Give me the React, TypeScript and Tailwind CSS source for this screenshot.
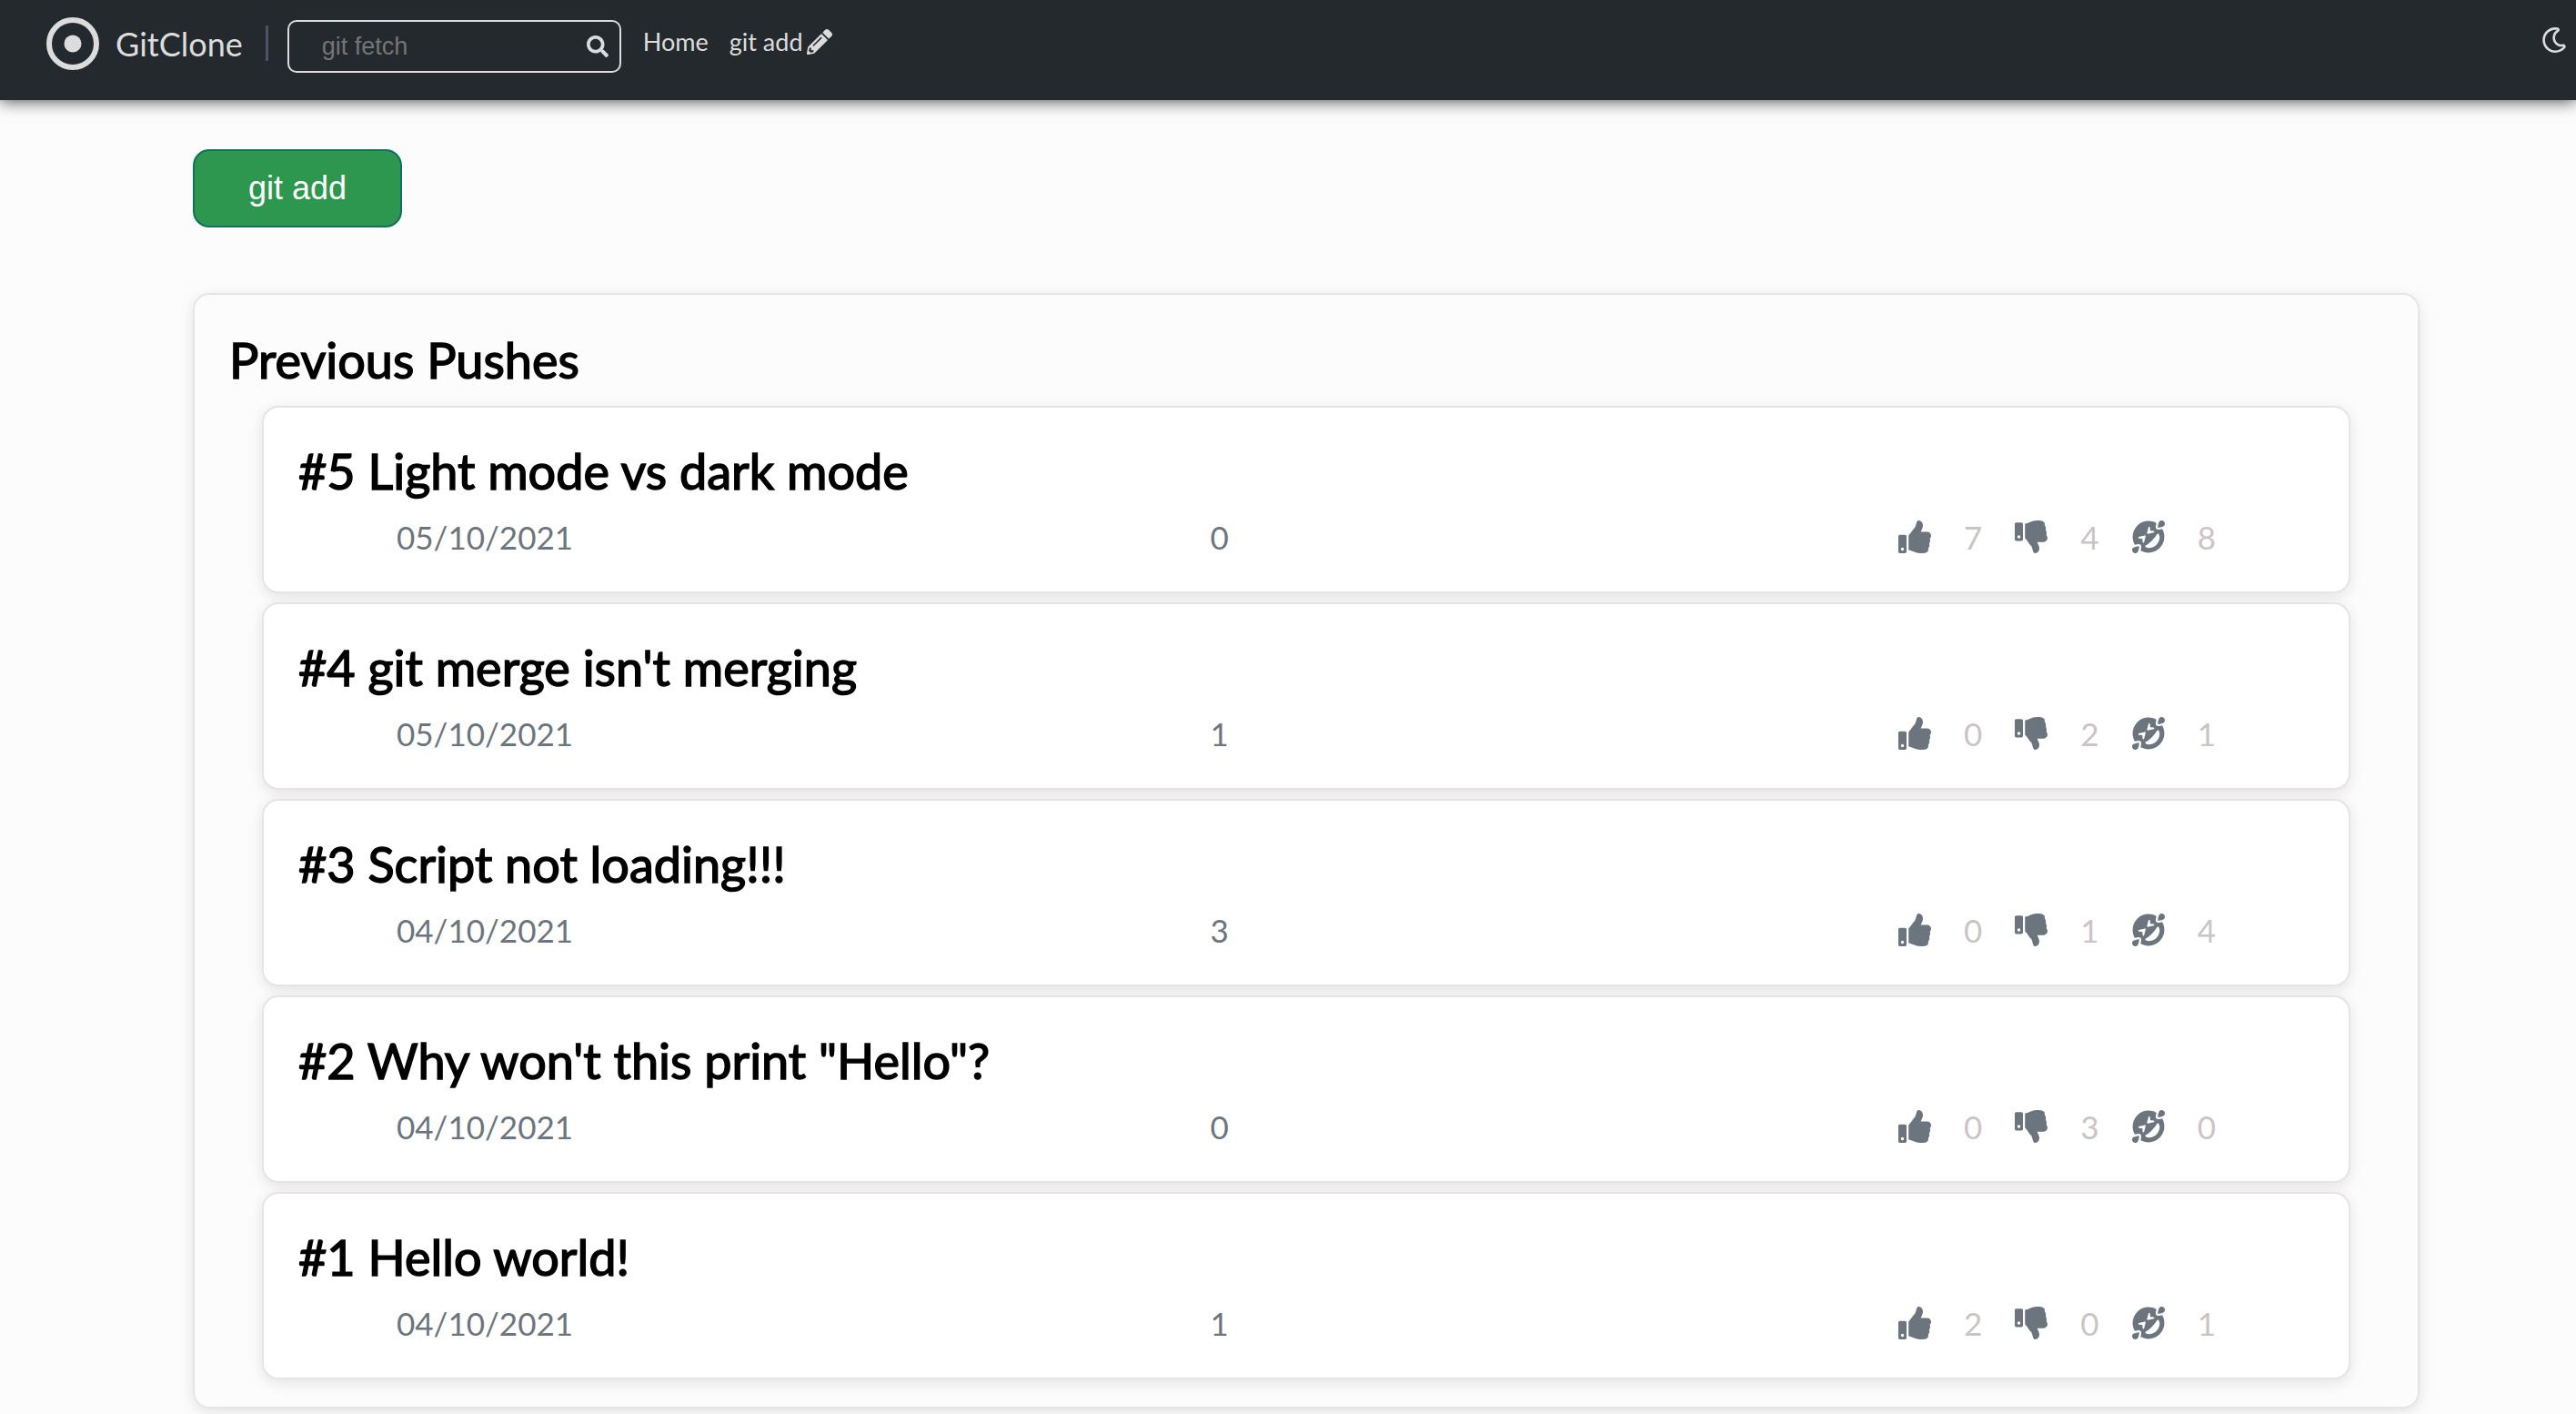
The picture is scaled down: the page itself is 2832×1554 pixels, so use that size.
import { FaPencilAlt, FaSearch, FaThumbsUp, FaThumbsDown, FaGrinSquintTears, FaRegMoon } from "react-icons/fa";

type Push = { id: number; title: string; date: string; comments: number; likes: number; dislikes: number; laughs: number };

const pushes: Push[] = [
  { id: 5, title: "Light mode vs dark mode", date: "05/10/2021", comments: 0, likes: 7, dislikes: 4, laughs: 8 },
  { id: 4, title: "git merge isn't merging", date: "05/10/2021", comments: 1, likes: 0, dislikes: 2, laughs: 1 },
  { id: 3, title: "Script not loading!!!", date: "04/10/2021", comments: 3, likes: 0, dislikes: 1, laughs: 4 },
  { id: 2, title: "Why won't this print \"Hello\"?", date: "04/10/2021", comments: 0, likes: 0, dislikes: 3, laughs: 0 },
  { id: 1, title: "Hello world!", date: "04/10/2021", comments: 1, likes: 2, dislikes: 0, laughs: 1 },
];

function Header() {
  return (
    <header className="flex h-[110px] items-start bg-[#24292e] pl-[51px] pr-[10px] text-[#dcdcdc] shadow-[0_2px_16px_rgba(0,0,0,0.65)]">
      <a href="#" className="mt-[19px] flex items-center gap-[18px]">
        <svg viewBox="0 0 58 58" className="size-[58px]" aria-hidden="true">
          <circle cx="29" cy="29" r="26" fill="none" stroke="currentColor" strokeWidth="6" />
          <circle cx="29" cy="29" r="9.5" fill="currentColor" />
        </svg>
        <span className="text-[36px] leading-[58px]">GitClone</span>
      </a>
      <div className="ml-[25px] mt-7 h-[39px] w-[3px] bg-[#4a5568]" />
      <form className="ml-[21px] mt-[22px] flex h-[58px] w-[367px] items-center rounded-[10px] border-2 border-[#dcdcdc] pl-9 pr-3">
        <input
          type="search"
          aria-label="Search pushes"
          placeholder="git fetch"
          className="min-w-0 flex-1 bg-transparent font-['Liberation_Sans',sans-serif] text-[27px] outline-none placeholder:text-[#757575]"
        />
        <button type="submit" aria-label="Search">
          <FaSearch className="size-6" />
        </button>
      </form>
      <nav className="ml-6 mt-7 flex gap-[23px] text-[27px] leading-9">
        <a href="#">Home</a>
        <a href="#" className="flex items-center gap-1">
          git add <FaPencilAlt className="size-7" />
        </a>
      </nav>
      <button type="button" aria-label="Toggle dark mode" className="ml-auto mt-[30px]">
        <FaRegMoon className="size-7" />
      </button>
    </header>
  );
}

function Reaction({ label, icon: Icon, count }: { label: string; icon: typeof FaThumbsUp; count: number }) {
  return (
    <div className="flex items-center gap-9">
      <button type="button" aria-label={label} className="text-[#6c757d]">
        <Icon className="size-9" />
      </button>
      <span>{count}</span>
    </div>
  );
}

function PushCard({ push }: { push: Push }) {
  return (
    <li className="rounded-[18px] border-2 border-[#e8e4e4] bg-white px-[38px] pb-[38px] pt-9 shadow-[0_4px_16px_rgba(0,0,0,0.1)]">
      <h3 className="text-[54px] leading-[68px] text-black [-webkit-text-stroke:1.5px_black]">
        #{push.id} {push.title}
      </h3>
      <div className="flex items-center justify-between px-[108px] pt-4 text-[35px] leading-[44px] text-[#6c757d]">
        <time>{push.date}</time>
        <span className="pr-9">{push.comments}</span>
        <div className="flex gap-9 text-[#cbc4c6]">
          <Reaction label="Like" icon={FaThumbsUp} count={push.likes} />
          <Reaction label="Dislike" icon={FaThumbsDown} count={push.dislikes} />
          <Reaction label="Laugh" icon={FaGrinSquintTears} count={push.laughs} />
        </div>
      </div>
    </li>
  );
}

export default function App() {
  return (
    <div className="min-h-screen bg-[#fcfcfc] font-[Lato,sans-serif]">
      <Header />
      <main className="pb-[6px] pl-[212px] pr-[172px] pt-[54px]">
        <button
          type="button"
          className="h-[86px] w-[230px] rounded-[18px] border-2 border-[#13705c] bg-[#2e974f] font-['Liberation_Sans',sans-serif] text-[36px] text-white"
        >
          git add
        </button>
        <section className="mt-[72px] rounded-[18px] border-2 border-[#e8e4e4] px-[38px] pb-[30px] pt-[38px] shadow-[0_4px_16px_rgba(0,0,0,0.1)]">
          <h2 className="text-[54px] leading-[68px] text-black [-webkit-text-stroke:1.5px_black]">Previous Pushes</h2>
          <ul className="mt-4 flex flex-col gap-[10px] px-9">
            {pushes.map((push) => (
              <PushCard key={push.id} push={push} />
            ))}
          </ul>
        </section>
      </main>
    </div>
  );
}
